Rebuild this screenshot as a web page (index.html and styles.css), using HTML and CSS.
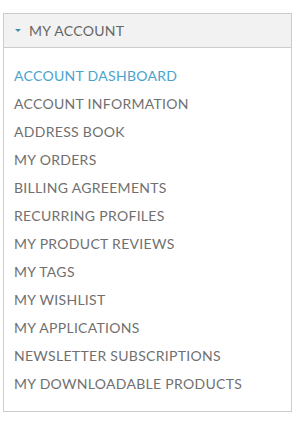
FILE: index.html
```html
<!DOCTYPE html>
<html>
<head>
    <meta charset="UTF-8">
    <title>My Account</title>
    <link rel="stylesheet" href="styles.css">
</head>
<body>
    <div class="block-account">
        <div class="block-title">
            <span class="caret"></span>
            <strong>My Account</strong>
        </div>
        <ul class="block-content">
            <li class="current"><a href="#">Account Dashboard</a></li>
            <li><a href="#">Account Information</a></li>
            <li><a href="#">Address Book</a></li>
            <li><a href="#">My Orders</a></li>
            <li><a href="#">Billing Agreements</a></li>
            <li><a href="#">Recurring Profiles</a></li>
            <li><a href="#">My Product Reviews</a></li>
            <li><a href="#">My Tags</a></li>
            <li><a href="#">My Wishlist</a></li>
            <li><a href="#">My Applications</a></li>
            <li><a href="#">Newsletter Subscriptions</a></li>
            <li><a href="#">My Downloadable Products</a></li>
        </ul>
    </div>
</body>
</html>
```

FILE: styles.css
```css
body {
    margin: 0;
    padding: 13px 2px 0 3px;
    background-color: white;
    font-family: Lato, "Liberation Sans", sans-serif;
}
.block-account {
    border: 1px solid #cccccc;
}
.block-title {
    display: flex;
    align-items: center;
    height: 33px;
    padding-left: 11px;
    background-color: #f2f2f2;
    border-bottom: 1px solid #cccccc;
}
.block-title strong {
    font-weight: normal;
    font-size: 14px;
    letter-spacing: 0.3px;
    color: #666666;
    text-transform: uppercase;
}
.caret {
    width: 0;
    height: 0;
    margin-right: 8px;
    border-left: 3px solid transparent;
    border-right: 3px solid transparent;
    border-top: 3px solid #3d8fb3;
}
.block-content {
    list-style: none;
    margin: 0;
    padding: 13px 0 14px 10px;
}
.block-content li {
    height: 28px;
    line-height: 28px;
}
.block-content a {
    font-size: 14px;
    letter-spacing: 0.3px;
    color: #707070;
    text-decoration: none;
    text-transform: uppercase;
}
.block-content li.current a {
    color: #4aa3cc;
}
```
